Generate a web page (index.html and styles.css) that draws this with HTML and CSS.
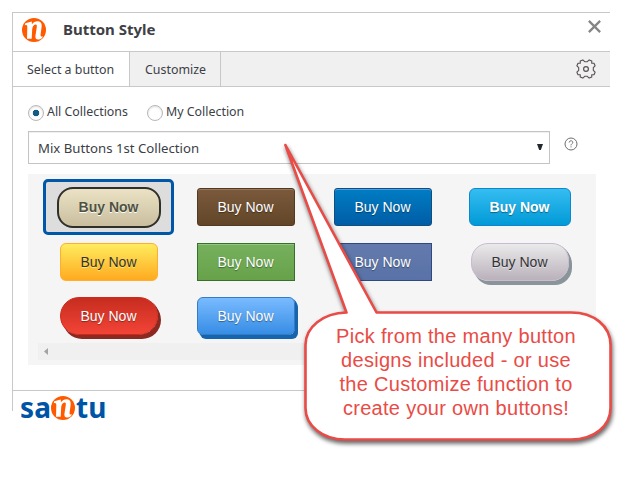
FILE: index.html
```html
<!DOCTYPE html>
<html lang="en">
<head>
<meta charset="utf-8">
<title>Button Style</title>
<link rel="stylesheet" href="styles.css">
</head>
<body>
<main class="dialog">
  <header class="head">
    <svg class="mark" viewBox="0 0 24 24"><circle cx="12" cy="12" r="12" fill="#ff5a00"/><path d="M3.2 5.2L9.8 3.4L9.9 6.2C11.6 3.9 13.8 2.9 16.2 3.2C19.3 3.6 20 6 19.6 9L18.6 16.5C18.4 18.4 19 19 21 18.3L20 20C17 22.4 12.8 22.3 13.4 18L14.8 9C15 7.2 14.6 6.4 13.4 6.6C11.6 7 10.4 9 10.2 11L9.7 20.8L5 20.8L5.3 9.6C5.3 7.4 5 6.8 2.8 7.2Z" fill="#fff"/></svg>
    <h1>Button Style</h1>
    <svg class="close" viewBox="0 0 12 12"><path d="M.8 .8L11.2 11.2M11.2 .8L.8 11.2" stroke="#858585" stroke-width="2.1"/></svg>
  </header>
  <nav class="tabs">
    <span class="tab active">Select a button</span>
    <span class="tab">Customize</span>
    <svg class="gear" viewBox="-10 -10 20 20"><path d="M-1.3 -7.3L-3.2 -9.1L-5.8 -8L-5.7 -5.7L-8 -5.8L-9.1 -3.2L-7.3 -1.3L-7.3 1.3L-9.1 3.2L-8 5.8L-5.7 5.7L-5.8 8L-3.2 9.1L-1.3 7.3L1.3 7.3L3.2 9.1L5.8 8L5.7 5.7L8 5.8L9.1 3.2L7.3 1.3L7.3 -1.3L9.1 -3.2L8 -5.8L5.7 -5.7L5.8 -8L3.2 -9.1L1.3 -7.3Z" fill="none" stroke="#574f55" stroke-width="1.1" stroke-linejoin="round"/><circle r="2.4" fill="none" stroke="#574f55" stroke-width="1.2"/></svg>
  </nav>
  <section class="body">
    <div class="radios">
      <span class="radio on"></span><span class="rlabel first">All Collections</span>
      <span class="radio"></span><span class="rlabel">My Collection</span>
    </div>
    <div class="picker">
      <div class="select"><span>Mix Buttons 1st Collection</span><svg width="6" height="6" viewBox="0 0 6 6"><path d="M0 0H6L3.8 6H2.2Z" fill="#23282d"/></svg></div>
      <svg class="help" viewBox="0 0 14 14"><circle cx="7" cy="7" r="6" fill="none" stroke="#6d6d6d"/><path d="M5.2 5.5C5.2 3.2 8.8 3.2 8.8 5.4C8.8 6.8 7 6.8 7 8.4M7 9.4V10.4" fill="none" stroke="#6d6d6d"/></svg>
    </div>
    <div class="panel">
      <div class="grid">
        <div class="cell"><div class="chosen"><span class="btn sand">Buy Now</span></div></div>
        <div class="cell"><span class="btn brown">Buy Now</span></div>
        <div class="cell"><span class="btn navy">Buy Now</span></div>
        <div class="cell"><span class="btn sky">Buy Now</span></div>
        <div class="cell"><span class="btn yellow">Buy Now</span></div>
        <div class="cell"><span class="btn green">Buy Now</span></div>
        <div class="cell"><span class="btn slate">Buy Now</span></div>
        <div class="cell"><span class="btn silver">Buy Now</span></div>
        <div class="cell"><span class="btn red">Buy Now</span></div>
        <div class="cell"><span class="btn blue">Buy Now</span></div>
      </div>
      <div class="scroll"><svg width="4" height="7" viewBox="0 0 4 7"><path d="M4 0V7L0 3.5Z" fill="#a3a3a3"/></svg></div>
    </div>
  </section>
  <footer class="foot">
    <span class="brand sa">sa</span>
    <svg class="mark" viewBox="0 0 24 24"><circle cx="12" cy="12" r="12" fill="#ff5a00"/><path d="M3.2 5.2L9.8 3.4L9.9 6.2C11.6 3.9 13.8 2.9 16.2 3.2C19.3 3.6 20 6 19.6 9L18.6 16.5C18.4 18.4 19 19 21 18.3L20 20C17 22.4 12.8 22.3 13.4 18L14.8 9C15 7.2 14.6 6.4 13.4 6.6C11.6 7 10.4 9 10.2 11L9.7 20.8L5 20.8L5.3 9.6C5.3 7.4 5 6.8 2.8 7.2Z" fill="#fff"/></svg>
    <span class="brand tu">tu</span>
  </footer>
</main>
<div class="callout">
  <svg width="330" height="310" viewBox="290 140 330 310"><path d="M285.4 145L346.5 312.5C323 313 305.5 327 305.5 345V408C305.5 426 323 439.5 345 439.5H571C594 439.5 610.5 426 610.5 408V345C610.5 326 594 312.5 571 312.5H376.5Z" fill="#fff" stroke="#e94b46" stroke-width="2.6" stroke-linejoin="round"/></svg>
  <p>Pick from the many button<br>designs included - or use<br>the Customize function to<br>create your own buttons!</p>
</div>
</body>
</html>
```
FILE: styles.css
```css
* { box-sizing: border-box; }
body { margin: 0; width: 640px; height: 480px; overflow: hidden; background: #fff; color: #3c4046; font: 12.4px/18px "Noto Sans", "Open Sans", sans-serif; }
svg { display: block; flex: none; }
.dialog { margin: 12px 0 0 12px; width: 598px; height: 399px; border: solid #c8c8c8; border-width: 1px 0 0 1px; }
.head { height: 39px; display: flex; border-bottom: 1px solid #c8c8c8; padding: 5px 9px 0; }
.mark { width: 24px; height: 24px; }
h1 { margin: 1px 0 0 17px; font-size: 15px; line-height: 20px; font-weight: 700; color: #3e4045; white-space: nowrap; }
.close { width: 13px; height: 13px; margin: 2px 0 0 auto; }
.tabs { height: 35px; display: flex; background: #f0f0f0; border-bottom: 1px solid #c8c8c8; }
.tab { padding: 9px 15px 0; border-right: 1px solid #c8c8c8; width: 91px; white-space: nowrap; }
.tab.active { width: 117px; background: #fff; padding-left: 14px; }
.gear { width: 20px; height: 20px; margin: 7px 14px 0 auto; }
.body { padding: 16px 0 0 15px; height: 303px; }
.radios { display: flex; height: 18px; }
.radio { width: 16px; height: 16px; margin-top: 2px; border: 1px solid #b8b8b8; border-radius: 50%; box-shadow: inset 0 1px 2px #0002; }
.radio.on { background: radial-gradient(circle, #165b82 3px, #fff 3.6px); }
.rlabel { margin-left: 3px; white-space: nowrap; }
.rlabel.first { width: 100px; }
.picker { display: flex; margin-top: 10px; }
.select { width: 522px; height: 33px; border: 1px solid #c4c4c4; box-shadow: inset 0 1px 1px #0001; display: flex; align-items: center; justify-content: space-between; padding: 0 6px 0 9px; font-size: 13.2px; }
.select svg { margin-top: -2px; }
.help { width: 14px; height: 14px; margin: 6px 0 0 14px; }
.panel { margin-top: 10px; width: 568px; height: 191px; background: #f5f5f5; padding: 5px 0 0 12px; }
.grid { display: grid; grid-template-columns: repeat(4, 137px); grid-template-rows: 56px 54px 54px; }
.cell { display: flex; align-items: center; justify-content: center; }
.chosen { width: 131px; height: 56px; border: 3px solid #0057a8; border-radius: 5px; background: #ddd; display: flex; align-items: center; justify-content: center; }
.btn { width: 98px; height: 38px; display: block; border: 1px solid; text-align: center; font: 14px/36px "Liberation Sans", Arial, sans-serif; color: #fff; text-shadow: 0 1px 1px #0006; }
.sand { width: 104px; height: 41px; border: 2px solid #302f29; border-radius: 16px; background: linear-gradient(#ebe2c5, #c9bf9f); color: #4f5141; font-weight: 700; line-height: 37px; text-shadow: 0 1px 0 #fff; }
.brown { border-color: #523920; border-radius: 3px; background: linear-gradient(#7b5a3c, #624528); box-shadow: inset 0 1px #96785e; }
.navy { border-color: #124d7d; border-radius: 3px; background: linear-gradient(#007dc3, #005da6); box-shadow: inset 0 1px #4a9fe3; }
.sky { width: 102px; border-color: #0b86cf; border-radius: 6px; background: linear-gradient(#35bdf1, #019ad7); font-weight: 700; }
.yellow { border-color: #ffae2e; border-radius: 6px; background: linear-gradient(#ffec5e, #ffaa20); color: #333; text-shadow: 0 1px 0 #ffe564; }
.green { border-color: #37702c; background: linear-gradient(#76b05d, #67a24a); box-shadow: inset 0 1px #93c77d; }
.slate { border-color: #304781; background: linear-gradient(#637aad, #5972a7); }
.silver { border-color: #ccb9d3; border-radius: 17px; background: linear-gradient(#eaeaea, #bab1bb); color: #333; text-shadow: 0 1px 0 #e1e2ed; box-shadow: 1px 1px #899599, 2px 2px #899599, 3px 4px #899599; }
.red { border-color: #d02718; border-radius: 19px; background: linear-gradient(#c62d1f, #f24437); box-shadow: 1px 1px #8a2a21, 2px 2px #8a2a21, 3px 4px #8a2a21; }
.blue { border-color: #337bc4; border-radius: 6px; background: linear-gradient(#79bbff, #378de5); box-shadow: 1px 1px #1564ad, 2px 2px #1564ad, 3px 4px #1564ad; }
.scroll { height: 17px; margin-left: -2px; background: #f0f0f0; padding: 5px 6px; width: 546px; }
.foot { border-top: 1px solid #c8c8c8; height: 30px; padding: 5px 0 0 7px; display: flex; }
.brand { font: 700 28px/25px "Noto Sans", sans-serif; color: #0054a6; margin-top: -1px; letter-spacing: .2px; }
.sa { width: 31px; }
.tu { margin-left: 1px; }
.callout { position: absolute; left: 290px; top: 140px; width: 330px; height: 310px; }
.callout svg { overflow: visible; filter: drop-shadow(1px 3px 2px #0009); }
.callout p { position: absolute; left: 14px; top: 184px; width: 304px; margin: 0; text-align: center; color: #e94b46; font: 20px/24px "Liberation Sans", Arial, sans-serif; letter-spacing: .3px; white-space: nowrap; }
```
